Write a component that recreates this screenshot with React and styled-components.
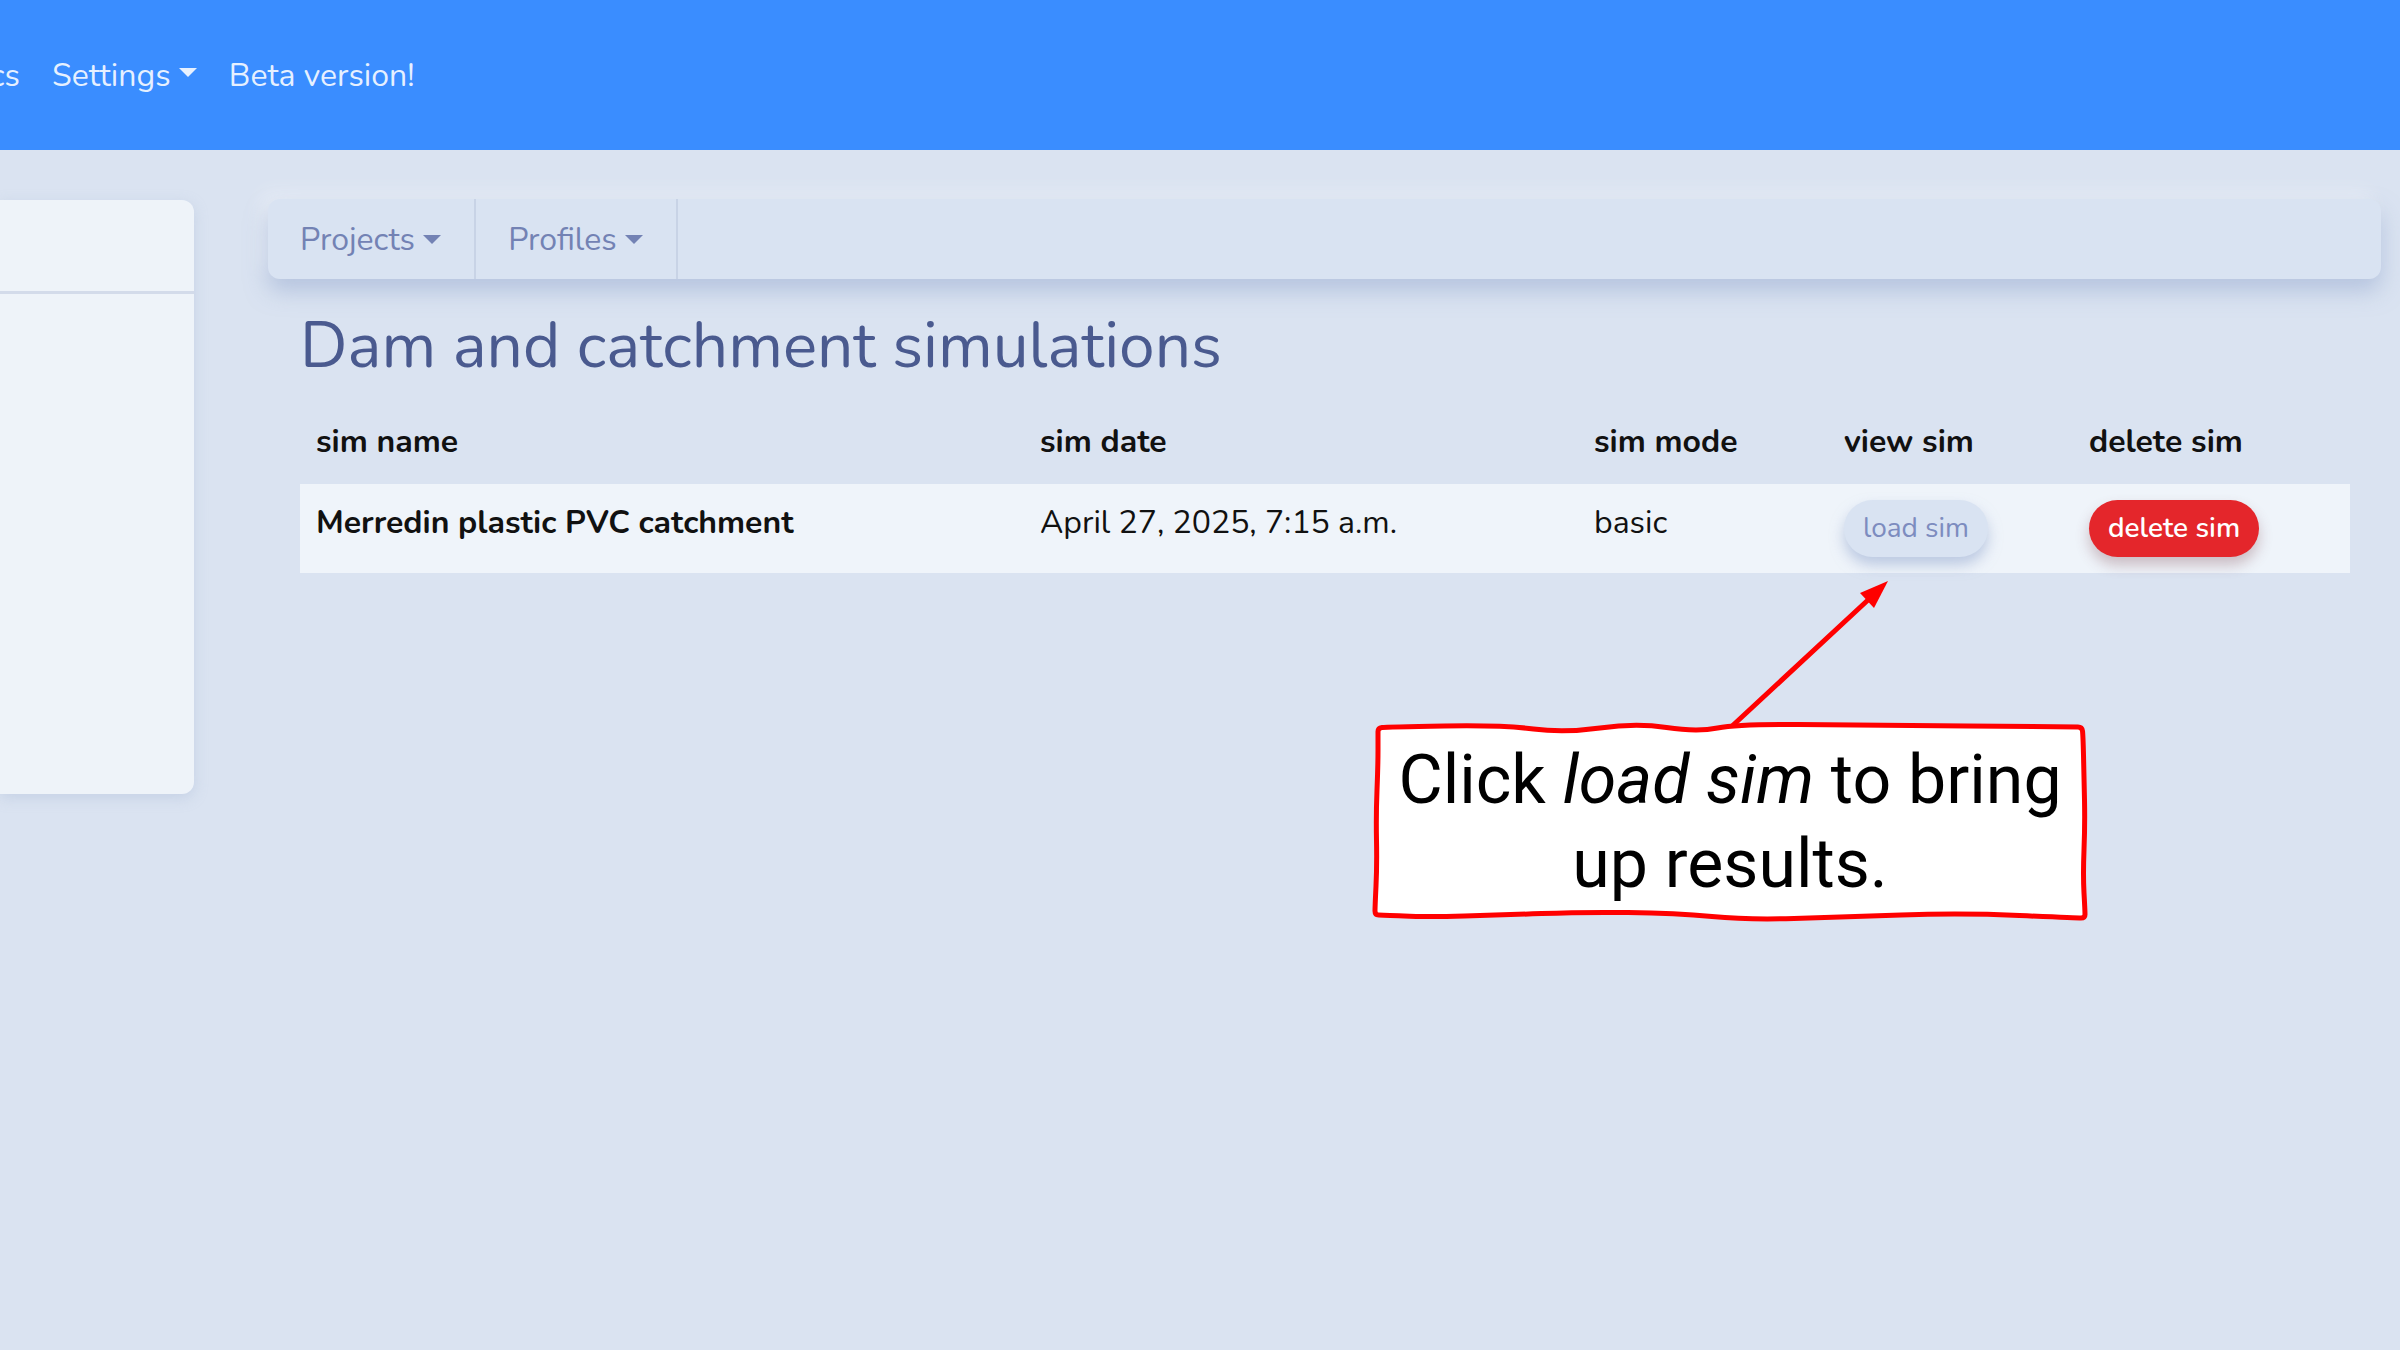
import React from "react";
import styled, { createGlobalStyle, css } from "styled-components";

const GlobalStyle = createGlobalStyle`
  html, body {
    margin: 0;
    padding: 0;
    background: #dae3f1;
    overflow: hidden;
  }
  body {
    font-family: Nunito, Lato, "Open Sans", sans-serif;
  }
  * { box-sizing: border-box; }
`;

const Page = styled.div`
  position: relative;
  width: 2400px;
  min-height: 1350px;
  background: #dae3f1;
`;

const Navbar = styled.nav`
  height: 150px;
  background: #3a8dff;
  display: flex;
  align-items: center;
`;

const NavList = styled.div`
  display: flex;
  align-items: center;
`;

const CutItem = styled.div`
  width: 36px;
  overflow: hidden;
  display: flex;
  justify-content: flex-end;
  white-space: nowrap;
`;

const caret = css`
  &::after {
    content: "";
    display: inline-block;
    margin-left: 0.255em;
    vertical-align: 0.255em;
    border-top: 0.3em solid;
    border-right: 0.3em solid transparent;
    border-left: 0.3em solid transparent;
  }
`;

const NavLink = styled.a`
  font-size: 32px;
  color: rgba(255, 255, 255, 0.88);
  padding: 0 16px;
  white-space: nowrap;
  ${(p) => p.$caret && caret}
`;

const Body = styled.div`
  display: flex;
  align-items: flex-start;
  padding-top: 49px;
`;

const SideCard = styled.aside`
  width: 194px;
  height: 594px;
  margin-top: 1px;
  background: #eef3f9;
  border-radius: 0 12px 12px 0;
  box-shadow: 0 4px 14px rgba(160, 178, 210, 0.35);
`;

const SideHead = styled.div`
  height: 94px;
  border-bottom: 3px solid #d3dbea;
`;

const Main = styled.main`
  flex: 1;
  margin-left: 74px;
  margin-right: 19px;
`;

const TabBar = styled.div`
  height: 80px;
  display: flex;
  background: #d9e3f2;
  border-radius: 12px;
  box-shadow: 0 12px 22px rgba(146, 166, 206, 0.5),
    -8px -8px 18px rgba(255, 255, 255, 0.35);
`;

const TabItem = styled.div`
  display: flex;
  align-items: center;
  padding: 0 33px 0 32px;
  font-size: 32px;
  color: #7382b4;
  border-right: 2px solid #c8d3e6;
  ${caret}
`;

const Content = styled.div`
  padding: 0 31px 0 32px;
`;

const Title = styled.h2`
  margin: 29px 0 16px;
  font-size: 64px;
  font-weight: 400;
  line-height: 1.2;
  color: #4a5a8f;
`;

const Table = styled.table`
  width: 100%;
  border-collapse: collapse;
  table-layout: fixed;
  color: #111;
`;

const Th = styled.th`
  text-align: left;
  font-size: 32px;
  font-weight: 700;
  line-height: 48px;
  padding: 17px 16px 18px;
  width: ${(p) => p.$w}px;
`;

const Row = styled.tr`
  background: #eff4fa;
`;

const Td = styled.td`
  font-size: 32px;
  line-height: 46px;
  padding: 16px;
  vertical-align: top;
  font-weight: ${(p) => (p.$bold ? 700 : 400)};
  white-space: nowrap;
`;

const Pill = styled.button`
  font-family: inherit;
  font-size: 28px;
  line-height: 43px;
  padding: 7px 19px;
  border: none;
  border-radius: 999px;
  background: ${(p) => (p.$danger ? "#e4262b" : "#d9e3f2")};
  color: ${(p) => (p.$danger ? "#fff" : "#7d8cbf")};
  font-weight: ${(p) => (p.$danger ? 600 : 400)};
  box-shadow: ${(p) =>
    p.$danger
      ? "0 8px 14px rgba(120, 60, 70, 0.3)"
      : "0 8px 14px rgba(146, 166, 206, 0.55)"};
`;

const Arrow = styled.svg`
  position: absolute;
  left: 1700px;
  top: 570px;
`;

const Callout = styled.div`
  position: absolute;
  left: 1370px;
  top: 715px;
  width: 720px;
  height: 210px;
`;

const CalloutFrame = styled.svg`
  position: absolute;
  inset: 0;
`;

const CalloutText = styled.p`
  position: relative;
  margin: 0;
  padding-top: 23px;
  text-align: center;
  font-family: Roboto, "Open Sans", sans-serif;
  font-size: 68px;
  line-height: 84px;
  color: #000;
  em { font-style: italic; }
`;

// wobbly hand-drawn outline, smoothed through midpoints; corners kept tight
const framePts = [
  [8, 13], [16, 12], [133, 10], [194, 18], [266, 8], [327, 17], [368, 9], [490, 10], [704, 12], [712, 12],
  [713, 20], [714, 60], [715, 110], [713, 160], [715, 196], [715, 203],
  [707, 203], [592, 198], [470, 202], [378, 205], [306, 198], [210, 197], [133, 200], [56, 202], [12, 200], [5, 200],
  [5, 192], [7, 150], [6, 100], [8, 50], [8, 20],
];

function smoothPath(pts) {
  const mid = (a, b) => [(a[0] + b[0]) / 2, (a[1] + b[1]) / 2];
  const n = pts.length;
  const start = mid(pts[n - 1], pts[0]);
  let d = `M${start[0]},${start[1]}`;
  for (let i = 0; i < n; i++) {
    const m = mid(pts[i], pts[(i + 1) % n]);
    d += ` Q${pts[i][0]},${pts[i][1]} ${m[0]},${m[1]}`;
  }
  return d + " Z";
}

const columns = [
  { label: "sim name", w: 724 },
  { label: "sim date", w: 554 },
  { label: "sim mode", w: 250 },
  { label: "view sim", w: 245 },
  { label: "delete sim", w: 277 },
];

export default function App() {
  return (
    <Page>
      <GlobalStyle />
      <Navbar>
        <NavList>
          <CutItem>
            <NavLink>Analytics</NavLink>
          </CutItem>
          <NavLink $caret>Settings</NavLink>
          <NavLink>Beta version!</NavLink>
        </NavList>
      </Navbar>

      <Body>
        <SideCard>
          <SideHead />
        </SideCard>
        <Main>
          <TabBar>
            <TabItem>Projects</TabItem>
            <TabItem>Profiles</TabItem>
          </TabBar>
          <Content>
            <Title>Dam and catchment simulations</Title>
            <Table>
              <thead>
                <tr>
                  {columns.map((c) => (
                    <Th key={c.label} $w={c.w}>
                      {c.label}
                    </Th>
                  ))}
                </tr>
              </thead>
              <tbody>
                <Row>
                  <Td $bold>Merredin plastic PVC catchment</Td>
                  <Td>April 27, 2025, 7:15 a.m.</Td>
                  <Td>basic</Td>
                  <Td>
                    <Pill>load sim</Pill>
                  </Td>
                  <Td>
                    <Pill $danger>delete sim</Pill>
                  </Td>
                </Row>
              </tbody>
            </Table>
          </Content>
        </Main>
      </Body>

      <Arrow width="200" height="170" viewBox="0 0 200 170">
        <line x1="30" y1="158" x2="168" y2="30" stroke="#f00" strokeWidth="5" strokeLinecap="round" />
        <polygon points="188,11 174,38 160,23" fill="#f00" />
      </Arrow>

      <Callout>
        <CalloutFrame width="720" height="210" viewBox="0 0 720 210">
          <path d={smoothPath(framePts)} fill="#fff" stroke="#f00" strokeWidth="5" strokeLinejoin="round" />
        </CalloutFrame>
        <CalloutText>
          Click <em>load sim</em> to bring
          <br />
          up results.
        </CalloutText>
      </Callout>
    </Page>
  );
}
